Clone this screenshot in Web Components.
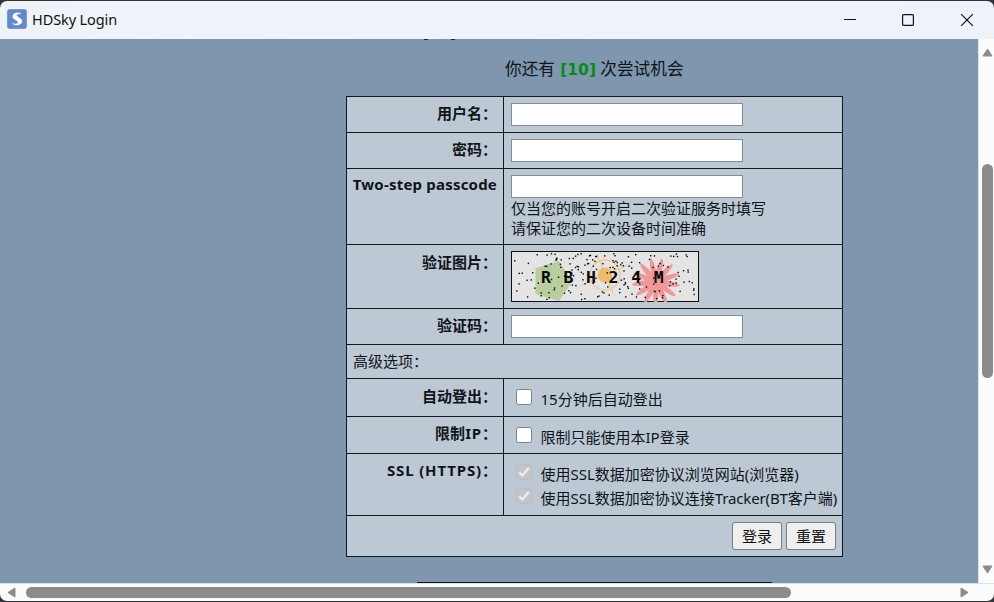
<!DOCTYPE html>
<html lang="zh-CN">
<head>
<meta charset="utf-8">
<title>HDSky Login</title>
<style>
html,body{margin:0;height:100%;overflow:hidden;background:#24242c}
body{font:15px/20px "Noto Sans","Noto Sans CJK SC",sans-serif;color:#101418}
</style>
</head>
<body>
<app-window>
  <title-bar slot="title">HDSky Login</title-bar>
  <login-page></login-page>
</app-window>
<script>
const define=(name,html,setup)=>customElements.define(name,class extends HTMLElement{
  constructor(){
    super();
    const t=document.createElement('template');
    t.innerHTML=html;
    this.attachShadow({mode:'open'}).append(t.content.cloneNode(true));
  }
  connectedCallback(){if(setup)setup(this,this.shadowRoot)}
});

define('title-bar',`<style>
:host{display:flex;align-items:center;height:38px;padding-left:7px;background:linear-gradient(90deg,#eef3f7,#eff3fc 18%,#eef3fa);color:#111;font-size:14.5px;box-sizing:border-box}
.name{margin-left:5px;flex:1;white-space:nowrap;letter-spacing:-.1px;padding-bottom:2px}
.icon{margin-bottom:2px}
.ctl{display:grid;grid-template-columns:58px 58px 59px;justify-items:center;align-items:center;margin-right:-2px}
svg{display:block}
</style>
<svg class="icon" width="20" height="20" viewBox="0 0 20 20"><rect x=".5" y=".5" width="19" height="19" rx="2" fill="#6288cf" stroke="#8199c6"/><path d="M14.2 4.7C11.5 3.2 6.1 3.5 5.8 7.2C5.5 10.7 10.2 10.4 11 13C11.4 14.6 9.3 15.6 5.7 14.4C8 16.9 14.7 16.4 15 12.5C15.2 9 10.2 9 9.7 6.5C9.5 5 11.5 4.4 14.2 4.7Z" fill="#fff" stroke="#fff" stroke-width=".5"/></svg>
<span class="name"><slot></slot></span>
<div class="ctl">
<svg width="14" height="14"><path d="M1 6.5H13" stroke="#111"/></svg>
<svg width="14" height="14"><rect x="1.6" y="1.6" width="10.8" height="10.8" rx="1" fill="none" stroke="#111" stroke-width="1.2"/></svg>
<svg width="14" height="14"><path d="M1.2 1.2L12.8 12.8M12.8 1.2L1.2 12.8" stroke="#111" stroke-width="1.2"/></svg>
</div>`);

define('scroll-bar',`<style>
:host{display:flex;background:#fcfcfc;box-sizing:border-box;align-items:center}
:host([vertical]){flex-direction:column;padding:9px 0 9px 2px;border-left:1px solid #dbe2e8}
:host([horizontal]){padding:0 25px 1px 7px;border-top:1px solid #dbe2e8}
.thumb{background:#8b8b8b;border-radius:6px}
:host([vertical]) .thumb{width:11px;height:214px;margin-top:107px}
:host([horizontal]) .thumb{height:11px;width:765px;margin-left:10px}
.a{fill:#8b8b8b;stroke:#8b8b8b;stroke-linejoin:round}
.gap{flex:1}
:host([vertical]) .h,:host([horizontal]) .v{display:none}
</style>
<svg class="v" width="11" height="9"><path class="a" d="M5.5 1L10 8H1Z"/></svg>
<svg class="h" width="9" height="11"><path class="a" d="M1 5.5L8 1V10Z"/></svg>
<div class="thumb"></div><div class="gap"></div>
<svg class="v" width="11" height="9"><path class="a" d="M1 1H10L5.5 8Z"/></svg>
<svg class="h" width="9" height="11"><path class="a" d="M1 1V10L8 5.5Z"/></svg>`);

define('app-window',`<style>
:host{display:flex;flex-direction:column;height:602px;width:994px;box-sizing:border-box;padding:1px 0;background:#33333b}
.frame{display:grid;flex:1;min-height:0;grid-template:38px 544px 18px / 978px 16px;border-radius:7px;overflow:hidden}
.t{grid-column:1/3}
.p{overflow:hidden;background:#7e97af}
scroll-bar[horizontal]{grid-column:1/3}
</style>
<div class="frame"><div class="t"><slot name="title"></slot></div><div class="p"><slot></slot></div><scroll-bar vertical></scroll-bar><scroll-bar horizontal></scroll-bar></div>`);

define('form-row',`<style>
:host{display:grid;grid-template-columns:156px 1px 338px;border-bottom:1px solid #14191e;height:var(--h);box-sizing:border-box;white-space:nowrap}
:host(:last-child){border-bottom:0}
.l{padding:var(--lt,6px) 6px 0 0;text-align:right;font-weight:700}
.s{background:#14191e}
.c{padding:6px 0 0 7px}
:host([wide]){display:block}
:host([wide]) .l,:host([wide]) .s{display:none}
:host([wide]) .c{padding:6px 6px 0}
</style>
<div class="l"><slot name="label"></slot></div><div class="s"></div><div class="c"><slot></slot></div>`);

define('text-field',`<style>
:host{display:block;width:232px;height:23px}
input{display:block;box-sizing:border-box;width:232px;height:23px;border:1px solid #868b90;background:#fff;margin:0;outline:0}
</style><input type="text">`);

define('check-option',`<style>
:host{display:flex;height:24px;padding-left:5px;align-items:center}
svg{margin:-4px 8.5px 0 0;flex:none}
.tick{display:none}
:host([locked]) rect{fill:#c3c6c9;stroke:#bbbec1}
:host([locked]) .tick{display:block}
</style>
<svg width="16" height="16"><rect x=".5" y=".5" width="15" height="15" rx="2" fill="#fff" stroke="#7d8287"/><path class="tick" d="M3.3 8.2L6.5 11.5L12.8 3.8" fill="none" stroke="#eceeef" stroke-width="2.2"/></svg>
<span><slot></slot></span>`);

define('push-button',`<style>
:host{display:block}
button{display:block;box-sizing:border-box;width:50px;height:28px;padding:0;font:15px/24px "Noto Sans CJK SC",sans-serif;color:#101010;background:#efefef;border:1px solid #777c81;border-radius:3px}
</style><button><slot></slot></button>`);

define('captcha-image',`<style>
:host{display:block;width:188px;height:51px}
svg{display:block}
text{font:700 16.5px "DejaVu Sans Mono",monospace;letter-spacing:12.6px;fill:#080808}
</style>
<svg width="188" height="51" viewBox="0 0 188 51">
<rect x=".5" y=".5" width="187" height="50" fill="#e4e4e4" stroke="#101010"/>
<path d="M24.5 17L48 10L61 31L48 50L24.5 43Z" fill="#b8ce9e"/>
<g fill="none" stroke="#f0c88c" stroke-width="1.3"><circle cx="94" cy="24" r="15"/><path d="M86 4L103 44M71 34L117 14"/></g>
<circle cx="94" cy="24" r="7.5" fill="#eebc6c"/>
<g class="burst" fill="#f09898"></g><g class="dots" fill="#080808"></g>
<text x="30" y="32">RBH24M</text></svg>`,(el,r)=>{
  const ns='http://www.w3.org/2000/svg';
  const burst=r.querySelector('.burst');
  for(let i=0;i<13;i++){
    const e=document.createElementNS(ns,'ellipse');
    for(const [k,v] of Object.entries({cx:155,cy:31,rx:14,ry:2.7,transform:`rotate(${i*360/13+8} 145 31)`}))e.setAttribute(k,v);
    burst.append(e);
  }
  const dots=r.querySelector('.dots');
  let seed=731;
  const rnd=()=>(seed=(seed*16807)%2147483647)/2147483647;
  for(let i=0;i<165;i++){
    const d=document.createElementNS(ns,'rect');
    d.setAttribute('x',(2+rnd()*183).toFixed(1));
    d.setAttribute('y',(2+rnd()*46).toFixed(1));
    d.setAttribute('width',1.4);d.setAttribute('height',1.4);
    dots.append(d);
  }
});

define('login-page',`<style>
:host{display:block;height:544px;width:978px}
main{display:flex;flex-direction:column;width:497px;height:544px;margin-left:346px}
.cut{height:1px;width:31px;margin-left:78px;display:flex;justify-content:space-between}
.cut i{width:4px;background:#1b2229}
.try{font-size:16.65px;line-height:24px;margin:17px 0 15px;padding-left:159px;white-space:nowrap}
b{font:700 15.5px/20px "DejaVu Sans",sans-serif;color:#0b8a12;margin:0 0 0 1px}
.form{border:1px solid #14191e;background:#bcc9d5;box-sizing:border-box;width:497px;height:461px}
.actions{display:flex;justify-content:flex-end;gap:4px}
.next{height:1px;width:355px;margin:auto 0 0 71px;background:#11161b}
.two{letter-spacing:.2px;display:block;margin-top:-1px}
.up{display:block;margin-top:-1px}
.w{letter-spacing:.85px}
.track{letter-spacing:-.15px}
</style>
<main>
<div class="cut"><i></i><i></i></div>
<div class="try">你还有 <b>[10]</b> 次尝试机会</div>
<div class="form">
<form-row style="--h:36px"><span slot="label">用户名：</span><text-field></text-field></form-row>
<form-row style="--h:36px"><span slot="label">密码：</span><text-field></text-field></form-row>
<form-row style="--h:76px"><span slot="label" class="two">Two-step passcode</span><text-field></text-field><div>仅当您的账号开启二次验证服务时填写<br>请保证您的二次设备时间准确</div></form-row>
<form-row style="--h:64px;--lt:7px"><span slot="label">验证图片：</span><captcha-image></captcha-image></form-row>
<form-row style="--h:36px"><span slot="label">验证码：</span><text-field></text-field></form-row>
<form-row wide style="--h:34px"><div>高级选项：</div></form-row>
<form-row style="--h:38px;--lt:7px"><span slot="label">自动登出：</span><check-option style="margin-top:2px">15分钟后自动登出</check-option></form-row>
<form-row style="--h:37px"><span slot="label">限制<span class="w">IP</span>：</span><check-option style="margin-top:2px">限制只能使用本IP登录</check-option></form-row>
<form-row style="--h:62px"><span slot="label"><span class="w">SSL (HTTPS)</span>：</span><check-option locked style="margin-top:2px">使用SSL数据加密协议浏览网站(浏览器)</check-option><check-option locked>使用SSL数据加密协议连接<span class="track">Tracker(BT</span>客户端)</check-option></form-row>
<form-row wide style="--h:40px"><div class="actions"><push-button>登录</push-button><push-button>重置</push-button></div></form-row>
</div>
<div class="next"></div>
</main>`);
</script>
</body>
</html>
